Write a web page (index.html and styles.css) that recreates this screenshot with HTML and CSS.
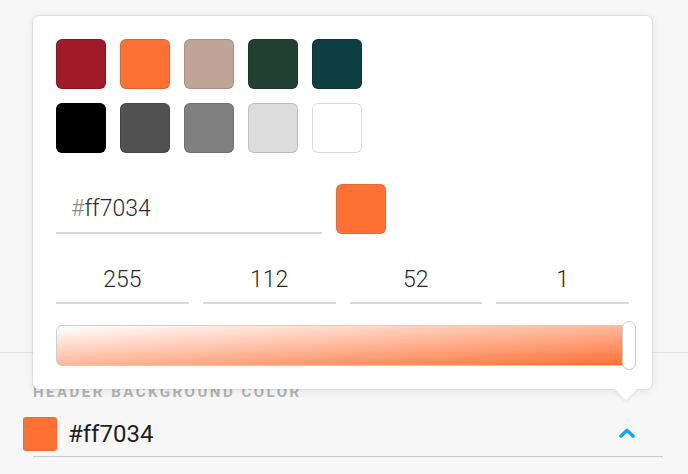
FILE: index.html
```html
<!DOCTYPE html>
<html lang="en">
<head>
    <meta charset="UTF-8">
    <meta name="viewport" content="width=device-width, initial-scale=1.0">
    <title>Header Background Color</title>
    <link rel="stylesheet" href="styles.css">
</head>
<body>
    <div class="section-above"></div>

    <div class="field">
        <div class="field-label">Header background color</div>
        <div class="field-row">
            <div class="current-swatch"></div>
            <div class="current-value">#ff7034</div>
            <svg class="chevron" width="18" height="12" viewBox="0 0 18 12">
                <polyline points="3,9 9,3.5 15,9" fill="none" stroke="#10a6f4" stroke-width="3.6" stroke-linecap="round" stroke-linejoin="round"/>
            </svg>
        </div>
    </div>

    <div class="picker">
        <div class="swatches">
            <div class="swatch" style="background: #a11a28"></div>
            <div class="swatch" style="background: #ff7034"></div>
            <div class="swatch" style="background: #c0a498"></div>
            <div class="swatch" style="background: #213f32"></div>
            <div class="swatch" style="background: #0d3e40"></div>
            <div class="swatch" style="background: #000000"></div>
            <div class="swatch" style="background: #515151"></div>
            <div class="swatch" style="background: #808080"></div>
            <div class="swatch light" style="background: #dcdcdc"></div>
            <div class="swatch light" style="background: #ffffff"></div>
        </div>

        <div class="hex-row">
            <div class="hex-input"><span class="hash">#</span>ff7034</div>
            <div class="preview"></div>
        </div>

        <div class="rgba-row">
            <div class="num-input">255</div>
            <div class="num-input">112</div>
            <div class="num-input">52</div>
            <div class="num-input">1</div>
        </div>

        <div class="alpha">
            <div class="alpha-bar"></div>
            <div class="alpha-handle"></div>
        </div>

        <div class="picker-arrow"></div>
    </div>
</body>
</html>
```

FILE: styles.css
```css
body {
    margin: 0;
    background: #f7f7f7;
    font-family: Roboto, "Liberation Sans", sans-serif;
    color: #222;
    position: relative;
    height: 474px;
    overflow: hidden;
}

.section-above {
    height: 352px;
    border-bottom: 1px solid #e2e2e2;
}

.field {
    padding: 0 25px 0 33px;
}

.field-label {
    margin-top: 30px;
    font-size: 15px;
    font-weight: bold;
    letter-spacing: 2.5px;
    text-transform: uppercase;
    color: #b3b3b3;
    line-height: 18px;
}

.field-row {
    display: flex;
    align-items: center;
    height: 40px;
    margin-top: 13px;
    padding-bottom: 2px;
    border-bottom: 1px solid #cacaca;
}

.current-swatch {
    width: 34px;
    height: 34px;
    margin-left: -10px;
    background: #ff7034;
    border-radius: 3px;
    box-shadow: inset 0 0 0 1px rgba(0,0,0,0.05);
}

.current-value {
    margin-left: 11px;
    font-size: 24px;
    color: #1e1e1e;
    flex: 1;
}

.chevron {
    margin-right: 27px;
    margin-top: -2px;
}

/* popover */
.picker {
    position: absolute;
    left: 33px;
    top: 16px;
    width: 573px;
    padding: 23px;
    background: #fff;
    border-radius: 6px;
    box-shadow: 0 0 0 1px rgba(0,0,0,0.06), 0 1px 10px rgba(0,0,0,0.1);
}

.swatches {
    display: grid;
    grid-template-columns: repeat(5, 50px);
    gap: 14px;
}

.swatch {
    height: 50px;
    border-radius: 6px;
    box-shadow: inset 0 0 0 1px rgba(0,0,0,0.12);
}

.swatch.light {
    box-shadow: inset 0 0 0 1px rgba(0,0,0,0.14);
}

.hex-row {
    display: flex;
    gap: 14px;
    margin-top: 31px;
}

.hex-input {
    width: 251px;
    height: 48px;
    padding-left: 15px;
    border-bottom: 2px solid #dadada;
    font-size: 23px;
    font-weight: 300;
    line-height: 50px;
    color: #2a2a2a;
}

.hash {
    color: #8a8a8a;
}

.preview {
    width: 50px;
    height: 50px;
    background: #ff7034;
    border-radius: 6px;
    box-shadow: inset 0 0 0 1px rgba(0,0,0,0.08);
}

.rgba-row {
    display: flex;
    gap: 14px;
    margin-top: 23px;
}

.num-input {
    flex: 1;
    height: 45px;
    border-bottom: 2px solid #dadada;
    text-align: center;
    font-size: 23px;
    font-weight: 300;
    line-height: 46px;
    color: #2a2a2a;
}

.alpha {
    position: relative;
    margin-top: 21px;
}

.alpha-bar {
    height: 39px;
    border: 1px solid #cfcfcf;
    border-radius: 6px;
    background: linear-gradient(to bottom right, #ffffff, #ff7034);
}

.alpha-handle {
    position: absolute;
    right: -7px;
    top: -4px;
    width: 12px;
    height: 47px;
    background: #fff;
    border: 1px solid #cccccc;
    border-radius: 7px;
}

.picker-arrow {
    position: absolute;
    right: 18px;
    bottom: -8px;
    width: 16px;
    height: 16px;
    background: #fff;
    transform: rotate(45deg);
    box-shadow: 2px 2px 3px rgba(0,0,0,0.06);
}
```
